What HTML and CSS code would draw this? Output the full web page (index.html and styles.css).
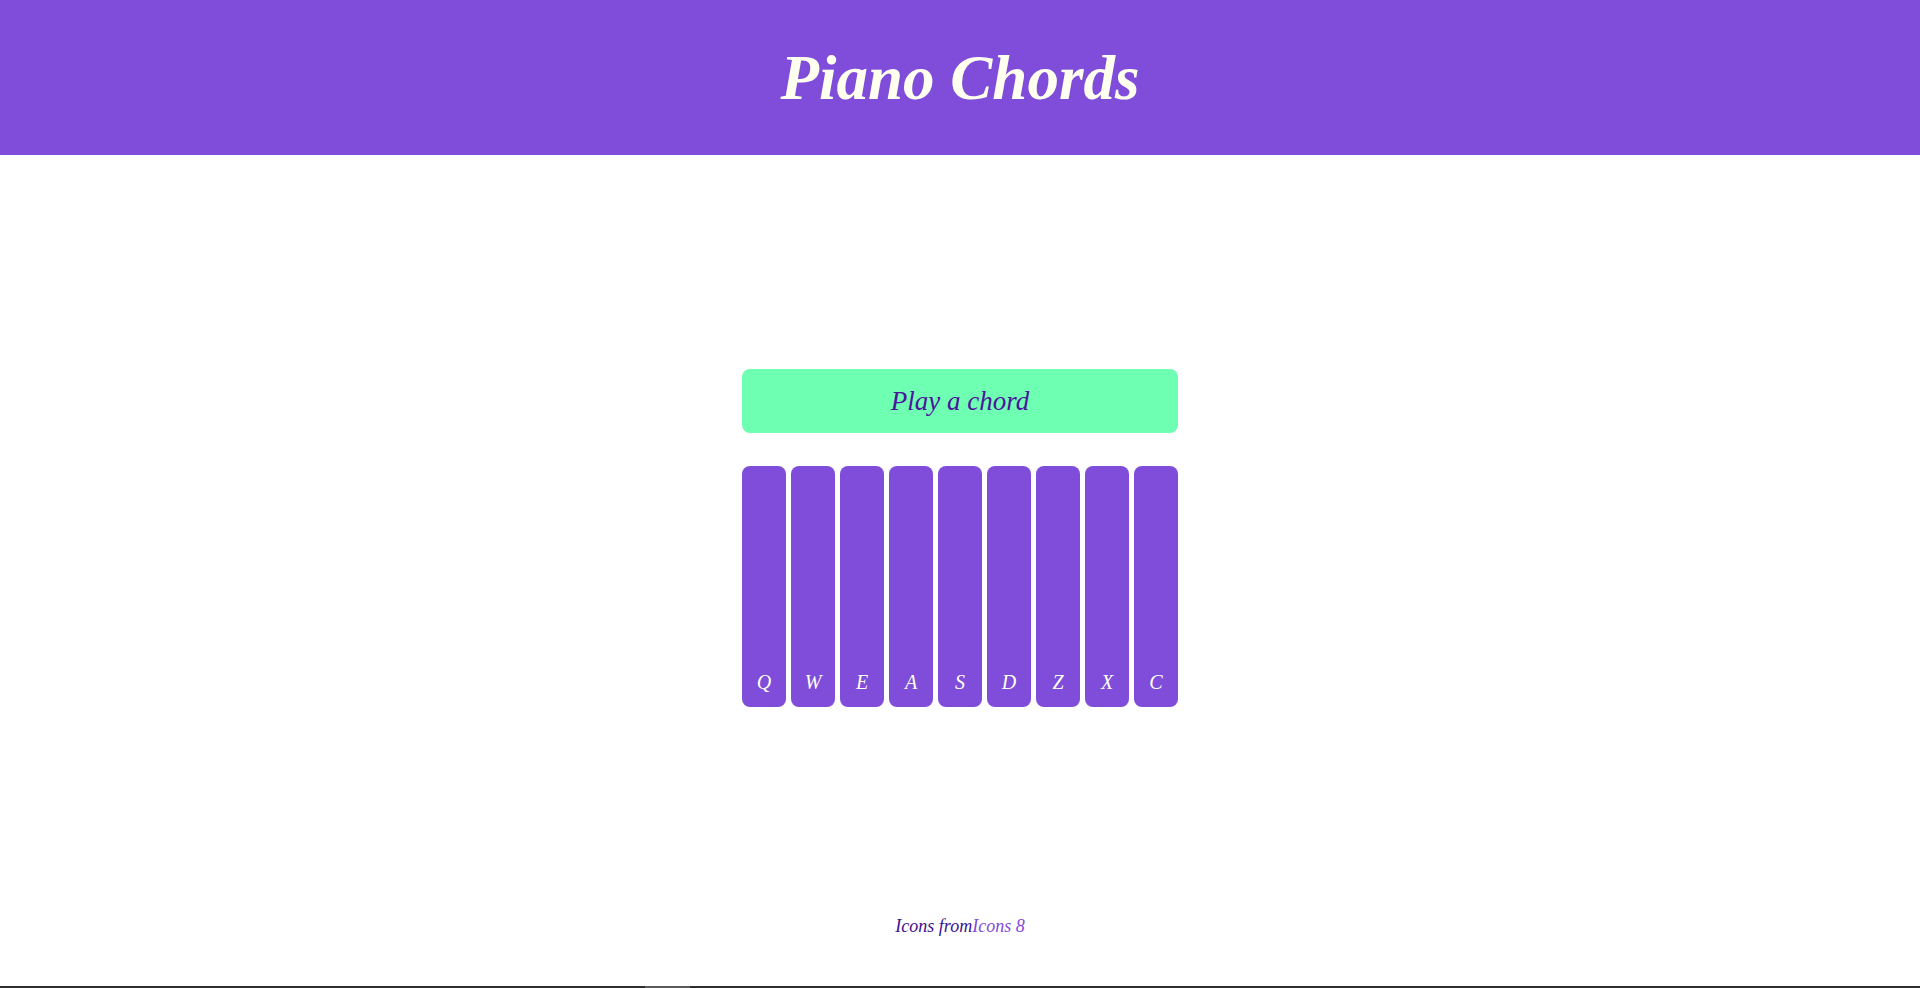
FILE: index.html
```html
<!DOCTYPE html>
<html lang="en">
<head>
<meta charset="utf-8">
<title>Piano Chords</title>
<link rel="stylesheet" href="styles.css">
</head>
<body>
<div class="page">
  <header class="header">
    <h1 class="title">Piano Chords</h1>
  </header>
  <main class="main">
    <div class="panel">
      <div class="display">Play a chord</div>
      <div class="keys">
        <div class="key">Q</div>
        <div class="key">W</div>
        <div class="key">E</div>
        <div class="key">A</div>
        <div class="key">S</div>
        <div class="key">D</div>
        <div class="key">Z</div>
        <div class="key">X</div>
        <div class="key">C</div>
      </div>
    </div>
  </main>
  <footer class="footer">Icons from<a class="link" href="#">Icons 8</a></footer>
  <div class="scrollbar"><div class="thumb"></div></div>
</div>
</body>
</html>
```
FILE: styles.css
```css
html, body {
  margin: 0;
  padding: 0;
  background: #ffffff;
}
.page {
  height: 988px;
  display: flex;
  flex-direction: column;
  font-family: "Liberation Serif", serif;
  overflow: hidden;
}
.header {
  height: 155px;
  flex: 0 0 155px;
  background: #7f4dda;
  display: flex;
  align-items: center;
  justify-content: center;
}
.title {
  margin: 0;
  font-size: 63px;
  line-height: 1;
  font-style: italic;
  font-weight: bold;
  color: #fffff0;
  padding-top: 2px;
}
.main {
  flex: 1;
  display: flex;
  justify-content: center;
  padding-top: 214px;
}
.panel {
  width: 436px;
  display: flex;
  flex-direction: column;
}
.display {
  height: 64px;
  background: #6effb2;
  border-radius: 8px;
  display: flex;
  align-items: center;
  justify-content: center;
  font-size: 27px;
  font-style: italic;
  color: #4a169c;
  margin-bottom: 33px;
}
.keys {
  display: flex;
  gap: 5px;
  height: 241px;
}
.key {
  flex: 1 1 0;
  background: #7f4dda;
  border-radius: 8px;
  display: flex;
  align-items: flex-end;
  justify-content: center;
  padding-bottom: 13px;
  box-sizing: border-box;
  font-size: 20px;
  font-style: italic;
  color: #fffff0;
}
.footer {
  text-align: center;
  font-size: 18px;
  line-height: 24px;
  font-style: italic;
  color: #3d1190;
  margin-bottom: 48px;
}
.link {
  color: #7f4dda;
  text-decoration: none;
}
.scrollbar {
  height: 2px;
  flex: 0 0 2px;
  background: #2e2e2e;
  position: relative;
}
.thumb {
  position: absolute;
  left: 645px;
  width: 45px;
  top: 0;
  height: 2px;
  background: #5a5a5a;
}
```
